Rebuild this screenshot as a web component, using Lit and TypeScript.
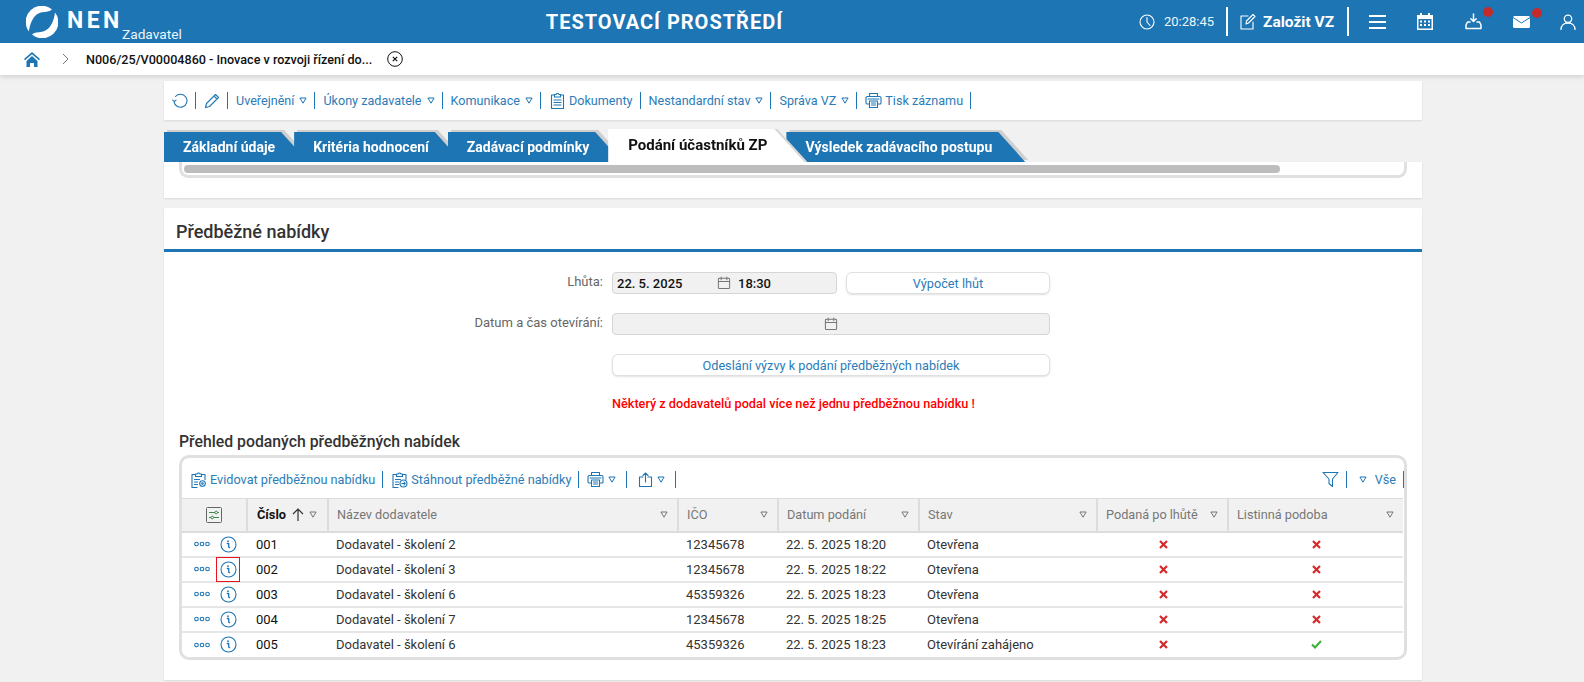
import { LitElement, html, css, svg } from "lit";
import { customElement } from "lit/decorators.js";

const ic = (w: number, body: unknown, vb = "0 0 16 16") =>
  html`<svg class="ic" width=${w} height=${w} viewBox=${vb} fill="none" stroke="currentColor" stroke-width="1.1" stroke-linecap="round" stroke-linejoin="round">${body}</svg>`;

const arrow = html`<svg class="arr" width="8" height="7" viewBox="0 0 8 7" fill="none" stroke="currentColor" stroke-width="1"><path d="M.9 1h6.200L4 6.200z"/></svg>`;
const printer = ic(17, svg`<path d="M4.500 4.500V1.500h8v3M4 12H2a1 1 0 0 1-1-1V6a1.500 1.500 0 0 1 1.500-1.500h12A1.500 1.500 0 0 1 16 6v5a1 1 0 0 1-1 1h-2"/><path d="M4.500 9h8v6.500h-8zM6.500 11h4M6.500 13h4M3 7h11"/>`, "0 0 17 17");
const clip = (extra: unknown) => ic(17, svg`<path d="M5.500 3.500H2v13h5M11.500 3.500H15v5"/><path d="M5.500 5.500v-2.500h1.500a1.600 1.600 0 0 1 3 0h1.500v2.500zM4.500 8.500h5M4.500 11h3M4.500 13.500h3"/>${extra}`, "0 0 17 17");
const clipPlain = ic(17, svg`<path d="M5.500 3H2.500v13.500h12V3H11.500"/><path d="M5.500 5V2.500h1.500a1.600 1.600 0 0 1 3 0h1.500V5zM5 8h7M5 10.500h7M5 13h7"/>`, "0 0 17 17");
const cal = ic(14, svg`<rect x="1.500" y="2.500" width="12" height="11" rx="1"/><path d="M1.500 6h12M4.500 1v3M10.500 1v3"/>`, "0 0 15 15");
const infoIc = ic(17, svg`<circle cx="8.500" cy="8.500" r="7.500"/><path d="M7.500 5.200h1M7.300 7.500h1.400v3.200c0 .8.400 1 .9 1" stroke-width="1.300"/>`, "0 0 17 17");
const dots = html`<svg class="ic" width="16" height="6" viewBox="0 0 16 6" fill="none" stroke="currentColor" stroke-width="1.100"><circle cx="2.500" cy="3" r="1.800"/><circle cx="8" cy="3" r="1.800"/><circle cx="13.500" cy="3" r="1.800"/></svg>`;
const cross = html`<svg width="9" height="9" viewBox="0 0 9 9" stroke="#d42a2c" stroke-width="2.200"><path d="M1 1l7 7M8 1l-7 7"/></svg>`;
const check = html`<svg width="11" height="9" viewBox="0 0 11 9" fill="none" stroke="#3fb03b" stroke-width="2.100"><path d="M1 4.500l3 3L10 1"/></svg>`;

const rows = [
  ["001", "Dodavatel - školení 2", "12345678", "22. 5. 2025 18:20", "Otevřena", false],
  ["002", "Dodavatel - školení 3", "12345678", "22. 5. 2025 18:22", "Otevřena", false],
  ["003", "Dodavatel - školení 6", "45359326", "22. 5. 2025 18:23", "Otevřena", false],
  ["004", "Dodavatel - školení 7", "12345678", "22. 5. 2025 18:25", "Otevřena", false],
  ["005", "Dodavatel - školení 6", "45359326", "22. 5. 2025 18:23", "Otevírání zahájeno", true],
] as const;

const cols = ["Název dodavatele", "IČO", "Datum podání", "Stav", "Podaná po lhůtě", "Listinná podoba"];

@customElement("app-root")
export class AppRoot extends LitElement {
  static styles = css`
    :host { display: block; height: 682px; overflow: hidden; background: #f1f1f1; font-family: Roboto, sans-serif; font-size: 13px; color: #333; }
    svg { display: block; flex: none; }
    .head { height: 43px; background: #1d75b4; color: #fff; display: flex; align-items: center; position: relative; }
    .logo { margin-left: 26px; }
    .nen { font-size: 23px; font-weight: 700; letter-spacing: 3.400px; margin-left: 9px; margin-top: -2px; width: 55px; white-space: nowrap; }
    .role { font-size: 13.700px; align-self: flex-end; padding-bottom: 1px; color: #eef5fa; }
    .title { margin-left: 364px; font-size: 20px; font-weight: 700; letter-spacing: 1px; white-space: nowrap; }
    .hright { margin-left: auto; display: flex; align-items: center; }
    .time { font-size: 13px; margin-left: 9px; color: #eef5fa; width: 51px; }
    .hsep { width: 2px; height: 29px; background: #fff; margin: 0 11px 0 11px; }
    .zal { font-size: 15.500px; font-weight: 700; margin-left: 7px; width: 73px; white-space: nowrap; }
    .hi { position: relative; width: 48px; display: flex; justify-content: center; }
    .badge { position: absolute; top: -6px; left: 34px; width: 10px; height: 10px; border-radius: 50%; background: #c62a2a; }
    .bm { top: -8px; left: 35px; }
    .hsep2 { margin-right: 4px; }
    .user { width: 32px; margin-left: 7px; }

    .crumb { height: 32px; background: #fff; display: flex; align-items: center; box-shadow: 0 2px 5px rgba(0,0,0,.13); position: relative; color: #111; }
    .home { margin-left: 24px; color: #1d75b4; }
    .chev { margin-left: 22px; color: #777; }
    .ctext { margin-left: 17px; font-weight: 500; font-size: 12.600px; color: #111; width: 288px; white-space: nowrap; }
    .cx { margin-left: 13px; }

    .main { padding: 6px 162px 0 164px; }
    .tb { height: 39px; background: #fff; display: flex; align-items: center; padding-left: 8px; color: #1d75b4; box-shadow: 0 1px 2px rgba(0,0,0,.1); font-size: 12.600px; }
    .sep { width: 1px; height: 17px; background: #1d75b4; margin: 0 8px 0 7px; flex: none; }
    .lnk { white-space: nowrap; color: #2b7cb8; }
    .arr { margin-left: 5px; color: #1d75b4; }
    .ico-t { margin: 0 3px 0 0; }

    .tabs { display: flex; margin-top: 11px; height: 31px; align-items: flex-end; }
    .tw { margin-right: -14px; filter: drop-shadow(3px -1.500px 0 #cfcfcf); position: relative; }
    .tab { height: 30px; display: flex; align-items: center; padding: 0 33px 0 19px; background: #1d75b4; color: #fff; font-weight: 700; font-size: 14px; white-space: nowrap; clip-path: polygon(0 0, calc(100% - 27px) 0, 100% 100%, 0 100%); }
    .tw.on { z-index: 2; margin-right: -18px; filter: drop-shadow(3px 0 0 #d8d8d8); }
    .on .tab { height: 31px; background: #fff; color: #111; font-size: 15px; font-weight: 700; padding: 0 37px 2px 20px; clip-path: polygon(0 0, calc(100% - 30px) 0, 100% 100%, 0 100%); }

    .card { background: #fff; box-shadow: 0 1px 2px rgba(0,0,0,.1); }
    .c1 { height: 36px; position: relative; z-index: 3; }
    .sb { margin: 0 15px; height: 16px; border: 3px solid #e0e0e0; border-top: 0; border-radius: 0 0 9px 9px; padding: 3px 2px 0; box-sizing: border-box; }
    .sbt { width: 1096px; height: 8px; border-radius: 4px; background: #bdbdbd; }
    .c2 { margin-top: 10px; height: 472px; display: flow-root; }
    h2 { margin: 0; line-height: 47px; padding-left: 12px; font-size: 18px; font-weight: 500; color: #333; border-bottom: 3px solid #1d75b4; box-sizing: border-box; height: 44px; }
    .form { display: grid; grid-template-columns: 439px 225px 204px; column-gap: 9px; row-gap: 19px; grid-auto-rows: 22px; margin-top: 20px; }
    .lab { text-align: right; color: #666; line-height: 20px; }
    .inp { background: #f1f1f1; border: 1px solid #d6d6d6; border-radius: 4px; box-sizing: border-box; display: flex; align-items: center; color: #777; }
    .inp b { font-weight: 500; color: #111; }
    .d { margin-left: 4px; width: 100px; }
    .t { margin-left: 7px; }
    .wide { grid-column: 2 / 4; }
    .inp.wide { justify-content: center; }
    .btn { background: #fff; border: 1px solid #e0e0e0; border-radius: 6px; box-sizing: border-box; box-shadow: 0 1px 2px rgba(0,0,0,.12); display: flex; align-items: center; justify-content: center; color: #2b7cb8; font-size: 12.700px; }
    .msg { margin: 19px 0 0 448px; color: #f00; font-weight: 500; height: 18px; line-height: 18px; font-size: 12.680px; }
    h3 { margin: 19px 0 0 15px; font-size: 15.800px; font-weight: 500; color: #333; height: 20px; line-height: 20px; }
    .panel { margin: 3px 15px 0; border: 3px solid #e0e0e0; border-radius: 10px; box-sizing: border-box; overflow: hidden; }
    .ptb { height: 40px; box-sizing: border-box; padding: 2px 0 0 8px; display: flex; align-items: center; color: #1d75b4; font-size: 12.700px; }
    .right { margin-left: auto; display: flex; align-items: center; }
    table { border-collapse: collapse; table-layout: fixed; width: 1221px; margin: 0; }
    th { background: #f1f1f1; height: 33px; padding: 0 0 0 8px; font-weight: 400; color: #777; text-align: left; border: 0; border-top: 1px solid #dcdcdc; border-bottom: 2px solid #dcdcdc; border-right: 2px solid #dcdcdc; box-sizing: border-box; font-size: 12.700px; }
    th:last-child { border-right: 0; }
    .thc { display: flex; align-items: center; justify-content: space-between; padding-right: 9px; color: #777; }
    .thc .arr { color: #777; }
    .thf { justify-content: center; padding: 0; }
    th.tn { padding-left: 9px; }
    th.tf { padding-left: 0; }
    .num { font-weight: 700; color: #111; font-size: 12.800px; }
    .numw { display: flex; align-items: center; color: #333; }
    .sorti { margin-left: 6px; }
    .thn { padding-right: 10px; }
    td { height: 25px; padding: 0 0 0 8px; border-bottom: 2px solid #e6e6e6; box-sizing: border-box; color: #333; }
    tr:last-child td { border-bottom: 0; }
    td.n { color: #111; padding-left: 9px; }
    td.c { padding: 0 0 0 2px; }
    td.c svg { margin: 0 auto; }
    td.a { padding: 0; }
    .acts { display: flex; align-items: center; color: #1d75b4; padding-left: 12px; height: 23px; }
    .info { width: 24px; height: 25px; display: flex; align-items: center; justify-content: center; box-sizing: border-box; flex: none; margin-left: 6px; }
    .info.mark { outline: 1px solid #e8131c; outline-offset: -1px; }
    .sp11 { margin: 0 11px 0 10px; }
    .spe { margin-left: 10px; }
    .ra { margin-left: 4px; display: flex; }
    .ra .arr { margin-left: 0; }
    .ve { margin-left: 8px; }
    .se7 { margin: 0 0 0 7px; }
    .pra { display: flex; align-items: center; }
    .pra .arr { margin-left: 4px; }
  `;

  private sep() { return html`<span class="sep"></span>`; }

  render() {
    return html`
      <div class="head">
        <svg class="logo" width="32" height="32" viewBox="0 0 32 32" fill="#fff"><path d="M26 3.500A16 16 0 0 0 3 25.500C3.500 22 5.500 8 16 6.300C20 5.700 24 5.500 26 3.500z"/><path transform="rotate(180 16 16)" d="M26 3.500A16 16 0 0 0 3 25.500C3.500 22 5.500 8 16 6.300C20 5.700 24 5.500 26 3.500z"/></svg>
        <span class="nen">NEN</span><span class="role">Zadavatel</span>
        <div class="title">TESTOVACÍ PROSTŘEDÍ</div>
        <div class="hright">
          ${ic(16, svg`<circle cx="8" cy="8" r="7"/><path d="M8 3.500V8l3 3.500" />`)}
          <span class="time">20:28:45</span>
          <span class="hsep"></span>
          ${ic(17, svg`<path d="M9 3H2v13h12V9M7 11l.5-3L14 1.500 16 3.500 9.500 10z"/>`, "0 0 17 17")}
          <span class="zal">Založit VZ</span>
          <span class="hsep hsep2"></span>
          <span class="hi"><svg width="17" height="14" viewBox="0 0 17 14" stroke="#fff" stroke-width="2"><path d="M0 1h17M0 7h17M0 13h17"/></svg></span>
          <span class="hi"><svg width="16" height="17" viewBox="0 0 16 17" fill="#fff"><path fill-rule="evenodd" d="M3 0h2v2h6V0h2v2h3v15H0V2h3zM1.500 6v9.500h13V6z"/><path d="M3 7.500h2v2H3zM7 7.500h2v2H7zM11 7.500h2v2h-2zM3 11h2v2H3zM7 11h2v2H7zM11 11h2v2h-2z"/></svg></span>
          <span class="hi">${ic(17, svg`<path d="M8.500 1v7M5.800 5.800l2.700 2.700 2.700-2.700" stroke-width="1.500"/><path d="M5 9H2.500L1 12v3.500h15V12l-1.500-3H12" stroke-width="1.500"/>`, "0 0 17 17")}<span class="badge"></span></span>
          <span class="hi"><svg width="17" height="12" viewBox="0 0 17 12"><rect width="17" height="12" rx="1.500" fill="#fff"/><path d="M0 1.500l8.500 5.500L17 1.500" fill="none" stroke="#1d75b4" stroke-width="1"/></svg><span class="badge bm"></span></span>
          <span class="hi user">${ic(16, svg`<circle cx="8" cy="4.800" r="3.700" stroke-width="1.300"/><path d="M1 15.500c0-4 3-6.500 7-6.500s7 2.500 7 6.500" stroke-width="1.300"/>`)}</span>
        </div>
      </div>
      <div class="crumb">
        <svg class="home" width="16" height="15" viewBox="0 0 16 15" fill="currentColor"><path d="M8 0L0 7l1 1.200L8 2.200l7 6L16 7zM2.500 9L8 4l5.500 5v6H10v-4H6v4H2.500z"/></svg>
        <svg class="chev" width="7" height="12" viewBox="0 0 7 12" fill="none" stroke="currentColor"><path d="M1 1l5 5-5 5"/></svg>
        <span class="ctext">N006/25/V00004860 - Inovace v rozvoji řízení do...</span>
        <svg class="cx" width="16" height="16" viewBox="0 0 16 16" fill="none" stroke="#111"><circle cx="8" cy="8" r="7.300"/><path d="M5.800 5.800l4.400 4.400M10.200 5.800l-4.400 4.400" stroke-width="1.200"/></svg>
      </div>
      <div class="main">
        <div class="tb">
          ${ic(16, svg`<path d="M3.500 3.500A6.500 6.500 0 1 1 2 8.500M.7 7l1.500 1.700L4 7.200"/>`)}${this.sep()}
          ${ic(16, svg`<path d="M1.500 14.500l1-4L11.500 1.500l3 3-9 9zM10 3l3 3"/>`)}${this.sep()}
          <span class="lnk">Uveřejnění</span>${arrow}${this.sep()}
          <span class="lnk">Úkony zadavatele</span>${arrow}${this.sep()}
          <span class="lnk">Komunikace</span>${arrow}${this.sep()}
          <span class="ico-t">${clipPlain}</span><span class="lnk">Dokumenty</span>${this.sep()}
          <span class="lnk">Nestandardní stav</span>${arrow}${this.sep()}
          <span class="lnk">Správa VZ</span>${arrow}${this.sep()}
          <span class="ico-t">${printer}</span><span class="lnk">Tisk záznamu</span>${this.sep()}
        </div>
        <div class="tabs">
          <div class="tw"><div class="tab">Základní údaje</div></div>
          <div class="tw"><div class="tab">Kritéria hodnocení</div></div>
          <div class="tw"><div class="tab">Zadávací podmínky</div></div>
          <div class="tw on"><div class="tab">Podání účastníků ZP</div></div>
          <div class="tw"><div class="tab">Výsledek zadávacího postupu</div></div>
        </div>
        <div class="card c1"><div class="sb"><div class="sbt"></div></div></div>
        <div class="card c2">
          <h2>Předběžné nabídky</h2>
          <div class="form">
            <div class="lab">Lhůta:</div>
            <div class="inp"><b class="d">22. 5. 2025</b>${cal}<b class="t">18:30</b></div>
            <div class="btn">Výpočet lhůt</div>
            <div class="lab">Datum a čas otevírání:</div>
            <div class="inp wide">${cal}</div>
            <div></div>
            <div class="btn wide">Odeslání výzvy k podání předběžných nabídek</div>
          </div>
          <div class="msg">Některý z dodavatelů podal více než jednu předběžnou nabídku !</div>
          <h3>Přehled podaných předběžných nabídek</h3>
          <div class="panel">
            <div class="ptb">
              <span class="ico-t">${clip(svg`<circle cx="12.500" cy="12.500" r="2.800"/><circle cx="12.500" cy="12.500" r=".8"/>`)}</span><span class="lnk">Evidovat předběžnou nabídku</span>${this.sep()}
              <span class="ico-t">${clip(svg`<circle cx="12.500" cy="12.500" r="3.500"/><path d="M10.800 12.500h3.400M13 11l1.300 1.500L13 14"/>`)}</span><span class="lnk">Stáhnout předběžné nabídky</span>${this.sep()}
              <span class="pra">${printer}${arrow}</span><span class="sep sp11"></span>
              <span class="pra">${ic(15, svg`<path d="M5 5H1.500v9.500h12V5H10M7.500 10V1M5 3.500L7.500 1 10 3.500"/>`, "0 0 15 15")}${arrow}</span><span class="sep spe"></span>
              <div class="right">
                ${ic(17, svg`<path d="M1 1.500h15L10.500 8v7.500L7 12.500V8z"/>`, "0 0 17 17")}
                ${this.sep()}
                <span class="ra">${arrow}</span>
                <span class="lnk ve">Vše</span>
                <span class="sep se7"></span>
              </div>
            </div>
            <table>
              <colgroup>
                <col style="width:65px"><col style="width:81px"><col style="width:350px"><col style="width:100px"><col style="width:141px"><col style="width:178px"><col style="width:131px"><col>
              </colgroup>
              <thead><tr>
                <th class="tf"><div class="thc thf"><svg width="16" height="16" viewBox="0 0 16 16" fill="none" stroke="#3e8a4a" stroke-width="1"><rect x=".5" y=".5" width="15" height="15" rx="1" stroke="#666"/><path d="M3 5.500h6M11.500 5.500H13M3 10.500h2M7.500 10.500H13"/><circle cx="10.200" cy="5.500" r="1.300"/><circle cx="6.200" cy="10.500" r="1.300"/></svg></div></th>
                <th class="tn"><div class="thc thn"><span class="numw"><span class="num">Číslo</span><svg class="sorti" width="12" height="13" viewBox="0 0 12 13" fill="none" stroke="#333" stroke-width="1.200"><path d="M6 13V1M1 6l5-5 5 5"/></svg></span>${arrow}</div></th>
                ${cols.map((c) => html`<th><div class="thc"><span>${c}</span>${arrow}</div></th>`)}
              </tr></thead>
              <tbody>
                ${rows.map((r, i) => html`<tr>
                  <td class="a"><div class="acts">${dots}<span class="info ${i === 1 ? "mark" : ""}">${infoIc}</span></div></td>
                  <td class="n">${r[0]}</td><td>${r[1]}</td><td>${r[2]}</td><td>${r[3]}</td><td>${r[4]}</td>
                  <td class="c">${cross}</td><td class="c">${r[5] ? check : cross}</td>
                </tr>`)}
              </tbody>
            </table>
          </div>
        </div>
      </div>
    `;
  }
}
